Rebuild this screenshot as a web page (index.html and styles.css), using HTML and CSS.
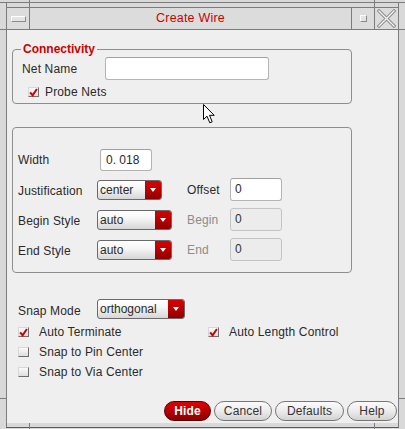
FILE: index.html
```html
<!DOCTYPE html>
<html>
<head>
<meta charset="utf-8">
<title>Create Wire</title>
<link rel="stylesheet" href="styles.css">
</head>
<body>
<div class="win">
  <span class="tick tick-t1"></span>
  <span class="tick tick-t2"></span>
  <span class="tick tick-l1"></span>
  <span class="tick tick-l2"></span>
  <span class="tick tick-r1"></span>
  <span class="tick tick-r2"></span>
  <span class="tick tick-b1"></span>
  <span class="tick tick-b2"></span>
  <div class="topline"></div>
  <div class="frame">
    <div class="titlebar">
      <div class="tb-btn tb-menu"><span class="menu-bar"></span></div>
      <div class="title">Create Wire</div>
      <div class="tb-btn tb-min"><span class="min-sq"></span></div>
      <div class="tb-btn tb-close">
        <svg width="19" height="19" viewBox="0 0 19 19">
          <path d="M2 2 L17 17 M17 2 L2 17" stroke="#8a8a8a" stroke-width="3.2" fill="none" stroke-linecap="square"/>
          <path d="M2 2 L17 17 M17 2 L2 17" stroke="#f4f4f4" stroke-width="1.3" fill="none" stroke-linecap="square"/>
        </svg>
      </div>
    </div>
    <div class="client">
      <fieldset class="group g1">
        <legend class="legend">Connectivity</legend>
        <div class="g1-body">
          <div class="net-row">
            <span class="lbl net-lbl">Net Name</span>
            <span class="input net-input"></span>
          </div>
          <div class="probe-row">
            <span class="cb cb-probe"><svg width="10" height="9" viewBox="0 0 10 9"><path d="M1.3 4.3 L4 7.6 L8.8 0.6" stroke="#cc0000" stroke-width="2.2" fill="none"/></svg></span>
            <span class="lbl probe-lbl">Probe Nets</span>
          </div>
        </div>
      </fieldset>

      <fieldset class="group g2">
        <div class="grid">
          <span class="lbl">Width</span>
          <span class="input width-input">0. 018</span>
          <span></span>
          <span></span>

          <span class="lbl lbl-sel">Justification</span>
          <span class="select sel-just"><span class="sel-text">center</span><span class="sel-arrow"></span></span>
          <span class="lbl">Offset</span>
          <span class="input side-input">0</span>

          <span class="lbl lbl-sel">Begin Style</span>
          <span class="select sel-style"><span class="sel-text">auto</span><span class="sel-arrow"></span></span>
          <span class="lbl dis">Begin</span>
          <span class="input side-input disabled">0</span>

          <span class="lbl lbl-sel">End Style</span>
          <span class="select sel-style"><span class="sel-text">auto</span><span class="sel-arrow"></span></span>
          <span class="lbl dis">End</span>
          <span class="input side-input disabled">0</span>
        </div>
      </fieldset>

      <div class="snap-row">
        <span class="lbl lbl-snap">Snap Mode</span>
        <span class="select sel-snap"><span class="sel-text">orthogonal</span><span class="sel-arrow"></span></span>
      </div>

      <div class="checks">
        <div class="check-row">
          <span class="check-item col1"><span class="cb"><svg width="10" height="9" viewBox="0 0 10 9"><path d="M1.3 4.3 L4 7.6 L8.8 0.6" stroke="#cc0000" stroke-width="2.2" fill="none"/></svg></span><span class="lbl">Auto Terminate</span></span>
          <span class="check-item col2"><span class="cb"><svg width="10" height="9" viewBox="0 0 10 9"><path d="M1.3 4.3 L4 7.6 L8.8 0.6" stroke="#cc0000" stroke-width="2.2" fill="none"/></svg></span><span class="lbl">Auto Length Control</span></span>
        </div>
        <div class="check-row">
          <span class="check-item col1"><span class="cb"></span><span class="lbl">Snap to Pin Center</span></span>
        </div>
        <div class="check-row">
          <span class="check-item col1"><span class="cb"></span><span class="lbl">Snap to Via Center</span></span>
        </div>
      </div>

      <div class="buttons">
        <span class="btn btn-hide">Hide</span>
        <span class="btn btn-cancel">Cancel</span>
        <span class="btn btn-defaults">Defaults</span>
        <span class="btn btn-help">Help</span>
      </div>
    </div>
  </div>
  <svg class="cursor" width="13" height="21" viewBox="0 0 13 21">
    <path d="M0.5 0.5 L0.5 15.5 L4 12.2 L6.8 18.8 L9.2 17.8 L6.5 11.3 L11.2 11.3 Z" fill="#ffffff" stroke="#000000" stroke-width="1" stroke-linejoin="miter"/>
  </svg>
</div>
</body>
</html>
```

FILE: styles.css
```css
html, body {
  margin: 0;
  padding: 0;
}
body {
  width: 405px;
  height: 429px;
  overflow: hidden;
  background: #d9d9d9;
  font-family: "Liberation Sans", Arial, sans-serif;
  font-size: 12px;
  color: #2a2a2a;
}
.win {
  position: relative;
  width: 405px;
  height: 429px;
  padding-top: 2px;
  box-sizing: border-box;
  background: #d9d9d9;
}
.topline {
  height: 1px;
  background: #7c7c7c;
}
.frame {
  margin: 0 6px;
  border-left: 1px solid #7c7c7c;
  border-right: 1px solid #7c7c7c;
  border-bottom: 1px solid #5a5a5a;
  padding-top: 4px;
  padding-bottom: 4px;
}
.tick {
  position: absolute;
  background: #7c7c7c;
}
.tick-t1 { left: 29px; top: 0; width: 1px; height: 7px; }
.tick-t2 { left: 374px; top: 0; width: 1px; height: 7px; }
.tick-b1 { left: 29px; top: 423px; width: 1px; height: 6px; }
.tick-b2 { left: 374px; top: 423px; width: 1px; height: 6px; }
.tick-l1 { left: 0; top: 29px; width: 6px; height: 1px; }
.tick-l2 { left: 0; top: 398px; width: 6px; height: 1px; }
.tick-r1 { left: 399px; top: 29px; width: 6px; height: 1px; }
.tick-r2 { left: 399px; top: 398px; width: 6px; height: 1px; }

/* title bar */
.titlebar {
  display: flex;
  height: 21px;
  border-top: 1px solid #7c7c7c;
  border-bottom: 1px solid #7c7c7c;
  background: #dcdcdc;
}
.tb-btn {
  display: flex;
  align-items: center;
  justify-content: center;
  background: #dcdcdc;
}
.tb-menu {
  width: 22px;
  border-right: 1px solid #7c7c7c;
}
.menu-bar {
  width: 13px;
  height: 4px;
  border-top: 1px solid #ffffff;
  border-left: 1px solid #ffffff;
  border-right: 1px solid #8a8a8a;
  border-bottom: 1px solid #8a8a8a;
  background: #e4e4e4;
}
.title {
  flex: 1;
  border-right: 1px solid #7c7c7c;
  text-align: center;
  color: #cc0000;
  font-size: 12.5px;
  line-height: 21px;
  letter-spacing: 0.2px;
}
.tb-min {
  width: 22px;
  border-right: 1px solid #7c7c7c;
}
.min-sq {
  width: 5px;
  height: 5px;
  border-top: 1px solid #ffffff;
  border-left: 1px solid #ffffff;
  border-right: 1px solid #8a8a8a;
  border-bottom: 1px solid #8a8a8a;
  background: #e4e4e4;
}
.tb-close {
  width: 23px;
}

/* client */
.client {
  height: 393px;
  background: #efefef;
  display: flex;
  flex-direction: column;
}
.lbl {
  white-space: nowrap;
  line-height: 16px;
  letter-spacing: 0.15px;
}
.dis {
  color: #8c8c8c;
}
.group {
  margin: 0 0 0 5px;
  padding: 0;
  width: 340px;
  box-sizing: border-box;
  border: 1px solid #8e8e8e;
  border-radius: 4px;
  min-width: 0;
}
.g1 {
  margin-top: 12px;
}
.legend {
  margin-left: 8px;
  padding: 0 2px;
  font-weight: bold;
  color: #cc0000;
  line-height: 14px;
  font-size: 12px;
}
.g1-body {
  padding: 1px 0 3px 9px;
}
.net-row {
  display: flex;
  align-items: center;
  height: 23px;
}
.net-lbl {
  width: 83px;
}
.input {
  box-sizing: border-box;
  height: 23px;
  background: #ffffff;
  border: 1px solid #b4b4b4;
  border-top-color: #a0a0a0;
  border-radius: 3px;
  padding-left: 4px;
  line-height: 21px;
  color: #2a2a2a;
}
.net-input {
  width: 164px;
}
.probe-row {
  display: flex;
  align-items: center;
  height: 16px;
  margin-top: 4px;
  padding-left: 6px;
}
.cb {
  width: 11px;
  height: 10px;
  box-sizing: border-box;
  border-top: 1px solid #d8d8d8;
  border-left: 1px solid #d8d8d8;
  border-right: 1px solid #6e6e6e;
  border-bottom: 1px solid #6e6e6e;
  background: linear-gradient(#fafafa, #dedede);
  display: flex;
  align-items: center;
  justify-content: center;
  flex: none;
}
.cb svg {
  display: block;
}
.probe-lbl {
  margin-left: 6px;
}

.g2 {
  margin-top: 23px;
}
.grid {
  padding: 20px 0 11px 5px;
  display: grid;
  grid-template-columns: 79px 90px 43px 52px;
  grid-auto-rows: 23px;
  row-gap: 7px;
  align-items: center;
}
.lbl-sel {
  padding-top: 3px;
}
.width-input {
  width: 52px;
  height: 22px;
  margin-left: 3px;
  line-height: 20px;
  padding-left: 5px;
}
.side-input {
  width: 52px;
}
.side-input.disabled {
  background: #ececec;
  border-color: #c4c4c4;
  color: #333333;
}

.select {
  display: flex;
  box-sizing: border-box;
  height: 20px;
  border: 1px solid #6a6a6a;
  border-radius: 3px;
  background: linear-gradient(#ffffff, #f6f6f6 40%, #d6d6d6);
  overflow: hidden;
}
.sel-text {
  flex: 1;
  line-height: 18px;
  padding-left: 2px;
  white-space: nowrap;
}
.sel-arrow {
  width: 16px;
  background: linear-gradient(#d80000, #b00000 60%, #8c0000);
  position: relative;
}
.sel-arrow::after {
  content: "";
  position: absolute;
  left: 5px;
  top: 7px;
  border-left: 3px solid transparent;
  border-right: 3px solid transparent;
  border-top: 4px solid #ffffff;
}
.sel-just {
  width: 65px;
}
.sel-style {
  width: 75px;
}
.sel-snap {
  width: 88px;
}

.snap-row {
  display: flex;
  align-items: center;
  height: 20px;
  margin-top: 26px;
  padding-left: 11px;
}
.lbl-snap {
  width: 79px;
  padding-top: 4px;
}

.checks {
  margin-top: 3px;
  padding-left: 11px;
}
.check-row {
  display: flex;
  height: 20px;
  align-items: center;
}
.check-item {
  display: flex;
  align-items: center;
}
.check-item .lbl {
  margin-left: 10px;
}
.col1 {
  width: 190px;
}

.buttons {
  display: flex;
  justify-content: flex-end;
  gap: 3px;
  margin-top: 19px;
  padding-right: 1px;
}
.btn {
  box-sizing: border-box;
  height: 20px;
  border: 1px solid #767676;
  border-radius: 10px;
  background: linear-gradient(#fbfbfb, #ececec 50%, #d2d2d2);
  text-align: center;
  line-height: 18px;
  color: #333333;
  letter-spacing: 0.15px;
}
.btn-hide {
  width: 47px;
  background: linear-gradient(#e00000, #b80000 50%, #8a0000);
  border-color: #5a0000;
  color: #ffffff;
  font-weight: bold;
}
.btn-cancel { width: 58px; }
.btn-defaults { width: 69px; }
.btn-help { width: 50px; }

.cursor {
  position: absolute;
  left: 203px;
  top: 104px;
}
```
